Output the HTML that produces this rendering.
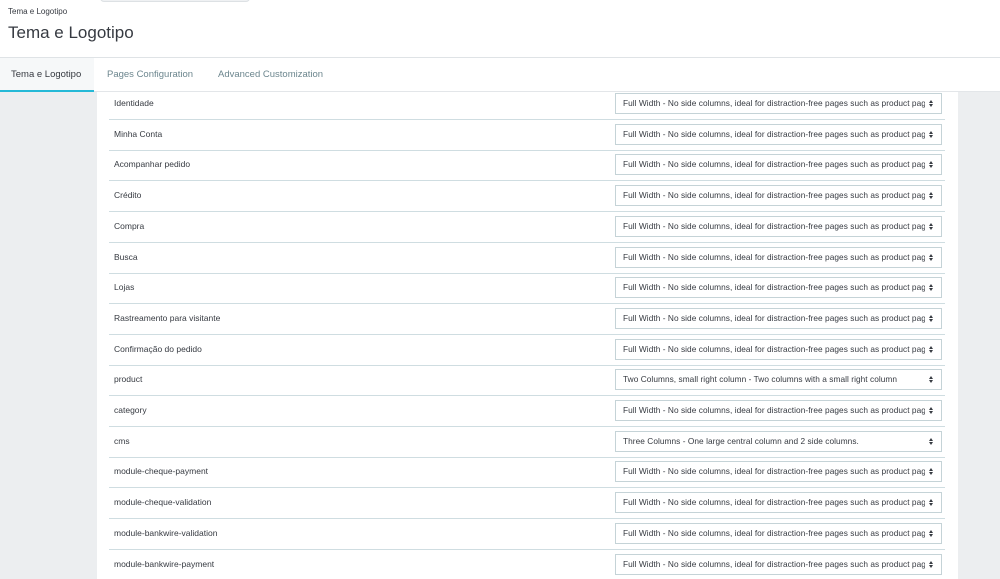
<!DOCTYPE html>
<html><head><meta charset="utf-8"><style>
*{box-sizing:border-box;margin:0;padding:0}
body{width:1000px;height:579px;overflow:hidden;background:#eceef0;font-family:"Liberation Sans",sans-serif;color:#363a41;position:relative}
.hdr{position:absolute;left:0;top:0;width:1000px;height:58px;background:#fff;border-bottom:1px solid #dfe3e6}
.pill{position:absolute;left:100px;top:-6px;width:150px;height:8px;border-radius:4px;background:#eff1f3;border:1px solid #dde1e4}
.bc{position:absolute;left:8px;top:7px;font-size:8px;color:#363a41}
.ttl{position:absolute;left:8px;top:23px;font-size:17px;color:#363a41}
.tabs{position:absolute;left:0;top:58px;width:1000px;height:34px;background:#fff;border-bottom:1px solid #e3e6e9}
.tab{position:absolute;top:0;height:34px;line-height:33px;font-size:9.5px;color:#6c868e}
.tab.a{color:#363a41;border-bottom:2px solid #25b9d7;background:#f6f8f9}
.panel{position:absolute;left:97px;top:92px;width:861px;height:487px;background:#fff;overflow:hidden}
.row{position:absolute;left:12px;width:836px;height:31px;border-bottom:1px solid #cfdde1}
.row .l{position:absolute;left:5px;top:1px;line-height:26px;font-size:8.5px;color:#363a41}
.sel{position:absolute;left:506px;top:4px;width:327px;height:21px;border:1px solid #c5d3d7;font-size:8.3px;line-height:19px;padding-left:7px;color:#363a41;white-space:nowrap;overflow:hidden;letter-spacing:0.05px}
.sel span{position:absolute;right:0;top:0;width:16px;height:19px;background:#fff}
.sel span:before,.sel span:after{content:"";position:absolute;left:4px;border-left:2.5px solid transparent;border-right:2.5px solid transparent}
.sel span:before{top:6px;border-bottom:3px solid #363a41}
.sel span:after{top:10px;border-top:3px solid #363a41}
</style></head><body>
<div class="hdr"><div class="pill"></div><div class="bc">Tema e Logotipo</div><div class="ttl">Tema e Logotipo</div></div>
<div class="tabs">
<div class="tab a" style="left:0;width:94px;padding-left:11px">Tema e Logotipo</div>
<div class="tab" style="left:107px">Pages Configuration</div>
<div class="tab" style="left:218px">Advanced Customization</div>
</div>
<div class="panel">
<div class="row" style="top:-3px"><div class="l">Identidade</div><div class="sel">Full Width - No side columns, ideal for distraction-free pages such as product pages<span></span></div></div>
<div class="row" style="top:27.7px"><div class="l">Minha Conta</div><div class="sel">Full Width - No side columns, ideal for distraction-free pages such as product pages<span></span></div></div>
<div class="row" style="top:58.4px"><div class="l">Acompanhar pedido</div><div class="sel">Full Width - No side columns, ideal for distraction-free pages such as product pages<span></span></div></div>
<div class="row" style="top:89.1px"><div class="l">Crédito</div><div class="sel">Full Width - No side columns, ideal for distraction-free pages such as product pages<span></span></div></div>
<div class="row" style="top:119.8px"><div class="l">Compra</div><div class="sel">Full Width - No side columns, ideal for distraction-free pages such as product pages<span></span></div></div>
<div class="row" style="top:150.5px"><div class="l">Busca</div><div class="sel">Full Width - No side columns, ideal for distraction-free pages such as product pages<span></span></div></div>
<div class="row" style="top:181.2px"><div class="l">Lojas</div><div class="sel">Full Width - No side columns, ideal for distraction-free pages such as product pages<span></span></div></div>
<div class="row" style="top:211.9px"><div class="l">Rastreamento para visitante</div><div class="sel">Full Width - No side columns, ideal for distraction-free pages such as product pages<span></span></div></div>
<div class="row" style="top:242.6px"><div class="l">Confirmação do pedido</div><div class="sel">Full Width - No side columns, ideal for distraction-free pages such as product pages<span></span></div></div>
<div class="row" style="top:273.3px"><div class="l">product</div><div class="sel">Two Columns, small right column - Two columns with a small right column<span></span></div></div>
<div class="row" style="top:304px"><div class="l">category</div><div class="sel">Full Width - No side columns, ideal for distraction-free pages such as product pages<span></span></div></div>
<div class="row" style="top:334.7px"><div class="l">cms</div><div class="sel">Three Columns - One large central column and 2 side columns.<span></span></div></div>
<div class="row" style="top:365.4px"><div class="l">module-cheque-payment</div><div class="sel">Full Width - No side columns, ideal for distraction-free pages such as product pages<span></span></div></div>
<div class="row" style="top:396.1px"><div class="l">module-cheque-validation</div><div class="sel">Full Width - No side columns, ideal for distraction-free pages such as product pages<span></span></div></div>
<div class="row" style="top:426.8px"><div class="l">module-bankwire-validation</div><div class="sel">Full Width - No side columns, ideal for distraction-free pages such as product pages<span></span></div></div>
<div class="row" style="top:457.5px"><div class="l">module-bankwire-payment</div><div class="sel">Full Width - No side columns, ideal for distraction-free pages such as product pages<span></span></div></div>
</div>
</body></html>
